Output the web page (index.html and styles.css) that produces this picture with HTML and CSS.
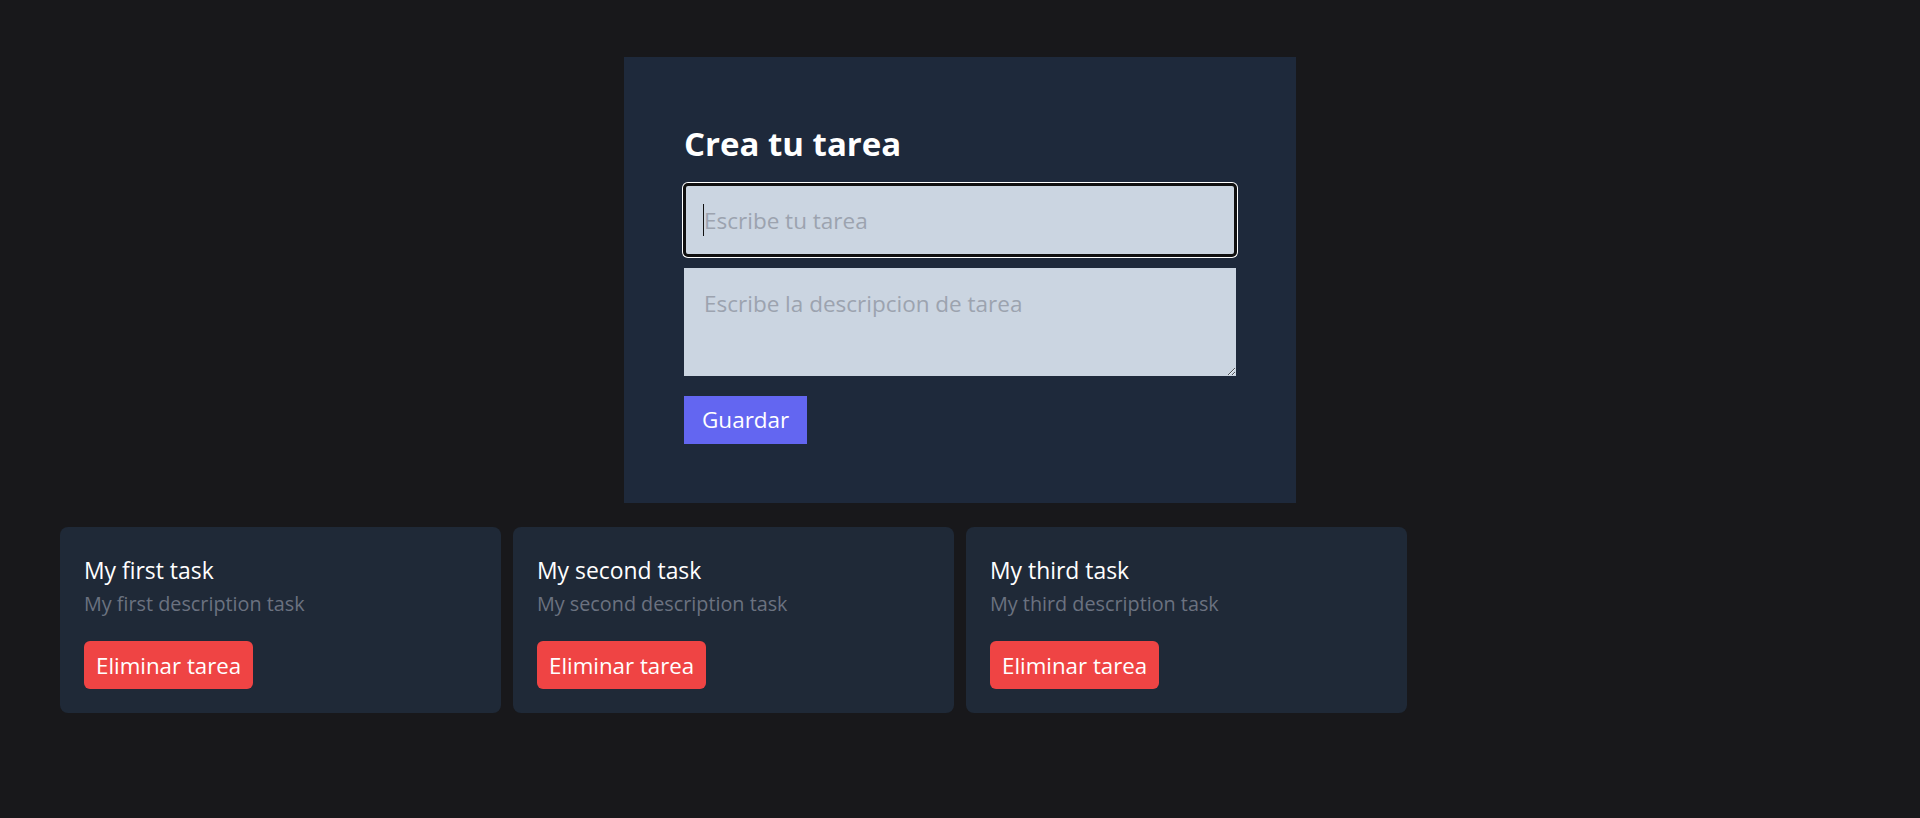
FILE: index.html
```html
<!DOCTYPE html>
<html lang="es">
<head>
<meta charset="utf-8">
<title>Tareas</title>
<link rel="stylesheet" href="styles.css">
</head>
<body>
<main class="page">
  <section class="form-panel">
    <form class="task-form">
      <h1 class="form-title">Crea tu tarea</h1>
      <div class="field field--focused">
        <input class="text-input" type="text" placeholder="Escribe tu tarea">
      </div>
      <textarea class="text-area" placeholder="Escribe la descripcion de tarea"></textarea>
      <button class="btn-save" type="button">Guardar</button>
    </form>
  </section>

  <section class="task-grid">
    <article class="task-card">
      <h2 class="task-title">My first task</h2>
      <p class="task-desc">My first description task</p>
      <button class="btn-delete" type="button">Eliminar tarea</button>
    </article>
    <article class="task-card">
      <h2 class="task-title">My second task</h2>
      <p class="task-desc">My second description task</p>
      <button class="btn-delete" type="button">Eliminar tarea</button>
    </article>
    <article class="task-card">
      <h2 class="task-title">My third task</h2>
      <p class="task-desc">My third description task</p>
      <button class="btn-delete" type="button">Eliminar tarea</button>
    </article>
  </section>
</main>
</body>
</html>
```

FILE: styles.css
```css
* {
  box-sizing: border-box;
}

html, body {
  margin: 0;
  padding: 0;
}

body {
  background: #18181b;
  font-family: "Open Sans", "Noto Sans", sans-serif;
  color: #ffffff;
  min-height: 818px;
}

.page {
  display: flex;
  flex-direction: column;
}

.form-panel {
  width: 672px;
  margin: 57px auto 0;
  padding: 60px 60px 59px;
  background: #1e293b;
}

.task-form {
  display: flex;
  flex-direction: column;
  align-items: stretch;
  margin: 0;
}

.form-title {
  margin: 0 0 14px;
  font-size: 33px;
  line-height: 53px;
  font-weight: 700;
  color: #ffffff;
}

.field {
  position: relative;
}

.text-input,
.text-area {
  display: block;
  width: 100%;
  margin: 0;
  border: 0;
  padding: 20px;
  background: #cbd5e1;
  color: #111827;
  font-family: "Open Sans", "Noto Sans", sans-serif;
  font-size: 22.5px;
  line-height: 32px;
}

.text-input {
  height: 72px;
  border-radius: 4px;
  outline: 3px solid #101010;
  outline-offset: -2px;
  box-shadow: 0 0 0 2px #ffffff;
}

.field--focused::after {
  content: "";
  position: absolute;
  left: 19px;
  top: 20px;
  width: 1px;
  height: 32px;
  background: #111111;
}

.text-input::placeholder,
.text-area::placeholder {
  color: #9ca3af;
  opacity: 1;
}

.text-area {
  margin-top: 12px;
  height: 108px;
  resize: both;
  outline: none;
}

.btn-save {
  align-self: flex-start;
  margin-top: 20px;
  height: 48px;
  padding: 8px 18px;
  border: 0;
  background: #6366f1;
  color: #ffffff;
  font-family: "Open Sans", "Noto Sans", sans-serif;
  font-size: 22.5px;
  line-height: 32px;
}

.task-grid {
  display: grid;
  grid-template-columns: repeat(4, 1fr);
  gap: 12px;
  align-items: start;
  margin-top: 24px;
  padding: 0 60px;
}

.task-card {
  background: #1f2937;
  border-radius: 8px;
  padding: 24px;
}

.task-title {
  margin: 0;
  font-size: 22.9px;
  line-height: 39px;
  font-weight: 400;
  color: #ffffff;
}

.task-desc {
  margin: 0;
  font-size: 19.8px;
  line-height: 28px;
  color: #6b7280;
}

.btn-delete {
  display: inline-block;
  margin-top: 23px;
  height: 48px;
  padding: 9px 12px 7px;
  border: 0;
  border-radius: 6px;
  background: #ef4444;
  color: #ffffff;
  font-family: "Open Sans", "Noto Sans", sans-serif;
  font-size: 22.3px;
  line-height: 32px;
}
```
